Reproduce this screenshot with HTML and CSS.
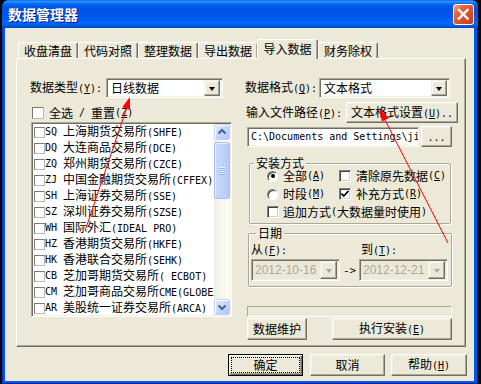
FILE: index.html
```html
<!DOCTYPE html>
<html>
<head>
	<meta http-equiv="Content-Type" content="text/html; charset=utf-8" />
	<title>数据管理器</title>
	<link rel="stylesheet" href="styles.css">
</head>
<body>
<div class="window">
	<div class="title_bar">
		<span class="title">数据管理器</span>
		<span class="close_btn">
			<svg width="19" height="19" viewBox="0 0 19 19"><path d="M5 5 L13.5 13.5 M13.5 5 L5 13.5" stroke="#fff" stroke-width="2.4" stroke-linecap="square" fill="none"/></svg>
		</span>
	</div>
	<div class="client">
		<div class="tabs">
			<div class="tab">收盘清盘</div>
			<div class="tab">代码对照</div>
			<div class="tab">整理数据</div>
			<div class="tab">导出数据</div>
			<div class="tab tab_active">导入数据</div>
			<div class="tab">财务除权</div>
		</div>
		<div class="panel">
			<div class="col_left">
				<div class="form_row">
					<span class="label label_type">数据类型<span class="en">(<u>Y</u>):</span></span>
					<div class="combo combo_type">
						<span class="combo_text">日线数据</span>
						<span class="drop_btn"><i class="arrow_down"></i></span>
					</div>
				</div>
				<div class="check_line">
					<span class="check"></span>全选<span class="en"> / </span>重置<span class="en">(<u>Z</u>)</span>
				</div>
				<div class="listbox">
					<div class="list_items">
						<div class="list_item"><span class="check"></span><span class="code">SQ</span><span>上海期货交易所<span class="en">(SHFE)</span></span></div>
						<div class="list_item"><span class="check"></span><span class="code">DQ</span><span>大连商品交易所<span class="en">(DCE)</span></span></div>
						<div class="list_item"><span class="check"></span><span class="code">ZQ</span><span>郑州期货交易所<span class="en">(CZCE)</span></span></div>
						<div class="list_item"><span class="check"></span><span class="code">ZJ</span><span>中国金融期货交易所<span class="en">(CFFEX)</span></span></div>
						<div class="list_item"><span class="check"></span><span class="code">SH</span><span>上海证券交易所<span class="en">(SSE)</span></span></div>
						<div class="list_item"><span class="check"></span><span class="code">SZ</span><span>深圳证券交易所<span class="en">(SZSE)</span></span></div>
						<div class="list_item"><span class="check"></span><span class="code">WH</span><span>国际外汇<span class="en">(IDEAL PRO)</span></span></div>
						<div class="list_item"><span class="check"></span><span class="code">HZ</span><span>香港期货交易所<span class="en">(HKFE)</span></span></div>
						<div class="list_item"><span class="check"></span><span class="code">HK</span><span>香港联合交易所<span class="en">(SEHK)</span></span></div>
						<div class="list_item"><span class="check"></span><span class="code">CB</span><span>芝加哥期货交易所<span class="en">( ECBOT)</span></span></div>
						<div class="list_item"><span class="check"></span><span class="code">CM</span><span>芝加哥商品交易所<span class="en">CME(GLOBEX)</span></span></div>
						<div class="list_item"><span class="check"></span><span class="code">AR</span><span>美股统一证券交易所<span class="en">(ARCA)</span></span></div>
					</div>
					<div class="vscroll">
						<div class="sb_btn">
							<svg width="14" height="14" viewBox="0 0 14 14"><path d="M3.5 8.5 L7 5 L10.5 8.5" stroke="#4D6185" stroke-width="2" fill="none"/></svg>
						</div>
						<div class="sb_thumb">
							<svg width="8" height="8" viewBox="0 0 8 8"><path d="M1 0.5 H7 M1 2.5 H7 M1 4.5 H7 M1 6.5 H7" stroke="#EEF3FE" stroke-width="1"/><path d="M1 1.5 H7 M1 3.5 H7 M1 5.5 H7 M1 7.5 H7" stroke="#8CB0F8" stroke-width="1"/></svg>
						</div>
						<div class="sb_track"></div>
						<div class="sb_btn">
							<svg width="14" height="14" viewBox="0 0 14 14"><path d="M3.5 5.5 L7 9 L10.5 5.5" stroke="#4D6185" stroke-width="2" fill="none"/></svg>
						</div>
					</div>
				</div>
			</div>
			<div class="col_right">
				<div class="form_row">
					<span class="label label_format">数据格式<span class="en">(<u>Q</u>):</span></span>
					<div class="combo combo_format">
						<span class="combo_text">文本格式</span>
						<span class="drop_btn"><i class="arrow_down"></i></span>
					</div>
				</div>
				<div class="form_row path_row">
					<span class="label label_path">输入文件路径<span class="en">(<u>P</u>):</span></span>
					<button class="btn btn_setup">文本格式设置<span class="en">(<u>U</u>)..</span></button>
				</div>
				<div class="form_row file_row">
					<div class="path_input">C:\Documents and Settings\ji</div>
					<button class="btn btn_browse"><span class="en">...</span></button>
				</div>
				<fieldset class="group group_install">
					<legend>安装方式</legend>
					<div class="group_body">
						<div class="opt_row">
							<span class="opt"><span class="radio radio_on"></span>全部<span class="en">(<u>A</u>)</span></span>
							<span class="opt"><span class="check check_3d"></span>清除原先数据<span class="en">(<u>C</u>)</span></span>
						</div>
						<div class="opt_row">
							<span class="opt"><span class="radio"></span>时段<span class="en">(<u>M</u>)</span></span>
							<span class="opt"><span class="check check_3d"><svg width="10" height="10" viewBox="0 0 10 10"><path d="M1.5 4.5 L3.8 7 L8.5 2" stroke="#000" stroke-width="1.8" fill="none"/></svg></span>补充方式<span class="en">(<u>R</u>)</span></span>
						</div>
						<div class="opt_row">
							<span class="opt opt_wide"><span class="check check_3d"></span>追加方式<span class="en">(</span>大数据量时使用<span class="en">)</span></span>
						</div>
					</div>
				</fieldset>
				<fieldset class="group group_date">
					<legend>日期</legend>
					<div class="date_labels">
						<span class="date_from">从<span class="en">(<u>F</u>):</span></span>
						<span>到<span class="en">(<u>T</u>):</span></span>
					</div>
					<div class="date_row">
						<div class="combo combo_date">
							<span class="combo_text">2012-10-16</span>
							<span class="drop_btn"><i class="arrow_down arrow_off"></i></span>
						</div>
						<span class="date_sep en">-&gt;</span>
						<div class="combo combo_date">
							<span class="combo_text">2012-12-21</span>
							<span class="drop_btn"><i class="arrow_down arrow_off"></i></span>
						</div>
					</div>
				</fieldset>
				<div class="progress"></div>
				<div class="action_row">
					<button class="btn btn_keep">数据维护</button>
					<button class="btn btn_run">执行安装<span class="en">(<u>E</u>)</span></button>
				</div>
			</div>
		</div>
		<div class="footer">
			<button class="btn btn_default"><span class="focus">确定</span></button>
			<button class="btn btn_cancel">取消</button>
			<button class="btn btn_help">帮助<span class="en">(<u>H</u>)</span></button>
		</div>
	</div>
</div>
<svg class="marks" width="481" height="384" viewBox="0 0 481 384">
	<line x1="86" y1="228" x2="127" y2="107" stroke="#FF0000" stroke-width="1"/>
	<polygon points="130,97 130,110 122.4,107.1" fill="#FF0000"/>
	<line x1="448" y1="243" x2="384" y2="118" stroke="#FF0000" stroke-width="1"/>
	<polygon points="379,108 389,118 381.9,121.5" fill="#FF0000"/>
</svg>
</body>
</html>
```

FILE: styles.css
```css
body{
	margin: 0;
	width: 481px;
	height: 384px;
	overflow: hidden;
	position: relative;
	background-color: #0a0a0a;
	font-family: "Noto Sans CJK SC", sans-serif;
	font-size: 12px;
	color: #000;
}

u{
	text-decoration: underline;
	text-underline-offset: 1px;
}

/* latin parts: narrow monospace like the old bitmap font */
.en{
	font-family: "DejaVu Sans Mono", monospace;
	font-size: 10px;
	white-space: pre;
}

/* xp window frame */
.window{
	margin-left: 2px;
	width: 476px;
	height: 384px;
	box-sizing: border-box;
	padding: 0 4px 3px 3px;
	background-color: #0055EA;
	border-radius: 7px 7px 0 0;
	box-shadow: inset 1px 0 #0831D9, inset -1px 0 #001EA0, inset 0 -1px #001EA0;
	display: flex;
	flex-direction: column;
}

.title_bar{
	height: 28px;
	margin: 0 -4px 0 -3px;
	padding-left: 6px;
	display: flex;
	align-items: center;
	flex-shrink: 0;
	border-radius: 7px 7px 0 0;
	background: linear-gradient(to bottom, #0058EE 0%, #3593FF 4%, #288EFF 7%, #127DFF 10%, #036FFC 13%, #0262EE 17%, #0057E5 24%, #0054E3 30%, #0055EB 56%, #005BF5 68%, #026AFE 80%, #0062EF 88%, #0052D6 94%, #0046C4 100%);
}

.title{
	color: #fff;
	font-weight: bold;
	font-size: 14px;
	line-height: 16px;
	text-shadow: 1px 1px #0A1883;
}

.close_btn{
	margin-left: auto;
	margin-right: 4px;
	width: 21px;
	height: 21px;
	box-sizing: border-box;
	border: 1px solid #fff;
	border-radius: 3px;
	background: linear-gradient(135deg, #F0A48A 0%, #E2633F 30%, #D4481F 75%, #C13C18 100%);
	display: flex;
}

.client{
	flex: 1;
	background-color: #ECE9D8;
	padding: 11px 8px 0 11px;
	box-sizing: border-box;
}

/* tabs */
.tabs{
	height: 19px;
	padding-left: 2px;
	display: flex;
	align-items: flex-end;
}

.tab{
	width: 60px;
	height: 16px;
	box-sizing: border-box;
	flex-shrink: 0;
	border-top: 1px solid #fff;
	border-left: 1px solid #fff;
	border-right: 1px solid #716F64;
	box-shadow: inset -1px 0 #ACA899;
	border-radius: 2px 2px 0 0;
	text-align: center;
	line-height: 15px;
	background-color: #ECE9D8;
}

.tab_active{
	width: 61px;
	height: 20px;
	margin-left: -1px;
	margin-bottom: -1px;
	line-height: 17px;
	position: relative;
	z-index: 1;
}

.panel{
	width: 450px;
	height: 289px;
	box-sizing: border-box;
	border: 1px solid;
	border-color: #fff #716F64 #716F64 #fff;
	box-shadow: inset -1px -1px #ACA899;
	padding: 19px 7px 0 13px;
	display: flex;
	gap: 14px;
}

.col_left{
	width: 201px;
	flex-shrink: 0;
	display: flex;
	flex-direction: column;
}

.col_right{
	width: 212px;
	flex-shrink: 0;
	display: flex;
	flex-direction: column;
}

.form_row{
	height: 20px;
	display: flex;
	align-items: center;
	flex-shrink: 0;
}

.label{
	flex-shrink: 0;
	line-height: 16px;
	white-space: nowrap;
}
.label_type{ width: 76px; }
.label_format{ width: 74px; }
.label_path{
	width: 100px;
	padding-left: 1px;
}

/* combo box */
.combo{
	height: 20px;
	box-sizing: border-box;
	flex-shrink: 0;
	border: 1px solid;
	border-color: #ACA899 #fff #fff #ACA899;
	box-shadow: inset 1px 1px #716F64, inset -1px -1px #F1EFE2;
	background-color: #fff;
	padding: 2px;
	display: flex;
	align-items: center;
}
.combo_type{ width: 117px; }
.combo_format{ width: 131px; }

.combo_text{
	flex: 1;
	min-width: 0;
	padding-left: 2px;
	line-height: 16px;
	white-space: nowrap;
	overflow: hidden;
}

.drop_btn{
	width: 16px;
	height: 16px;
	box-sizing: border-box;
	flex-shrink: 0;
	background-color: #ECE9D8;
	border: 1px solid;
	border-color: #F1EFE2 #716F64 #716F64 #F1EFE2;
	box-shadow: inset -1px -1px #ACA899, inset 1px 1px #fff;
	display: flex;
	align-items: center;
	justify-content: center;
}

.arrow_down{
	width: 0;
	height: 0;
	border-style: solid;
	border-width: 4px 3.5px 0 3.5px;
	border-color: #000 transparent transparent transparent;
	margin-top: 1px;
}
.arrow_off{
	border-top-color: #ACA899;
}

/* check boxes */
.check{
	width: 11px;
	height: 11px;
	box-sizing: border-box;
	flex-shrink: 0;
	background-color: #fff;
	border: 1px solid;
	border-color: #7A7A7A #B8B8B8 #B8B8B8 #7A7A7A;
	display: flex;
	align-items: center;
	justify-content: center;
}
.check_3d{
	width: 12px;
	height: 12px;
	border-color: #808080 #fff #fff #808080;
	box-shadow: inset 1px 1px #404040, inset -1px -1px #D4D0C8;
}

.check_line{
	height: 17px;
	margin-top: 6px;
	padding-left: 2px;
	display: flex;
	align-items: center;
	line-height: 16px;
	flex-shrink: 0;
}
.check_line .check{
	width: 12px;
	height: 12px;
	margin-right: 5px;
}

/* list of exchanges */
.listbox{
	width: 201px;
	height: 195px;
	margin: 1px 0 0 1px;
	box-sizing: border-box;
	flex-shrink: 0;
	border: 1px solid;
	border-color: #ACA899 #fff #fff #ACA899;
	box-shadow: inset 1px 1px #716F64, inset -1px -1px #F1EFE2;
	background-color: #fff;
	padding: 1px;
	display: flex;
}

.list_items{
	flex: 1;
	overflow: hidden;
	padding-left: 1px;
}

.list_item{
	height: 16px;
	line-height: 16px;
	display: flex;
	align-items: center;
	white-space: nowrap;
}

.code{
	width: 18px;
	flex-shrink: 0;
	font-family: "DejaVu Sans Mono", monospace;
	font-size: 10px;
}

.vscroll{
	width: 16px;
	flex-shrink: 0;
	display: flex;
	flex-direction: column;
	background: linear-gradient(to right, #F1EFE6, #FDFDFA);
}

.sb_btn{
	height: 16px;
	box-sizing: border-box;
	border: 1px solid #C3D3FD;
	border-radius: 2px;
	background: linear-gradient(135deg, #E1EAFE, #BED2FB 60%, #B2C8F8);
	box-shadow: inset 1px 1px #fff;
	display: flex;
	align-items: center;
	justify-content: center;
}

.sb_thumb{
	height: 57px;
	margin-top: 2px;
	box-sizing: border-box;
	border: 1px solid #A9BFF2;
	border-radius: 2px;
	background: linear-gradient(to right, #CBDAFC, #BDD0FA 60%, #B3C8F7);
	box-shadow: inset 1px 1px #E8EFFE;
	display: flex;
	align-items: center;
	justify-content: center;
}

.sb_track{
	flex: 1;
}

/* right column */
.path_row{
	height: 21px;
	margin-top: 4px;
}

.file_row{
	height: 21px;
	margin-top: 3px;
	padding-left: 2px;
}

.path_input{
	width: 172px;
	height: 20px;
	box-sizing: border-box;
	flex-shrink: 0;
	margin-right: 2px;
	border: 1px solid;
	border-color: #ACA899 #fff #fff #ACA899;
	box-shadow: inset 1px 1px #716F64, inset -1px -1px #F1EFE2;
	background-color: #fff;
	padding: 0 3px;
	font-family: "DejaVu Sans Mono", monospace;
	font-size: 10px;
	line-height: 18px;
	white-space: pre;
	overflow: hidden;
}

.btn{
	font-family: inherit;
	font-size: 12px;
	color: #000;
	height: 22px;
	box-sizing: border-box;
	flex-shrink: 0;
	padding: 0;
	background-color: #ECE9D8;
	border: 1px solid;
	border-color: #fff #716F64 #716F64 #fff;
	box-shadow: inset -1px -1px #ACA899, inset 1px 1px #F1EFE2;
	line-height: 16px;
	white-space: nowrap;
}

.btn_setup{
	width: 112px;
	height: 21px;
}

.btn_browse{
	width: 31px;
	height: 21px;
}

.group{
	margin: 9px 0 0 4px;
	padding: 0 0 2px 0;
	min-width: 0;
	width: 202px;
	box-sizing: border-box;
	border: 1px solid #ACA899;
	border-radius: 2px;
	box-shadow: inset 1px 1px #fff, 1px 1px #fff;
}

.group legend{
	padding: 0 2px;
	margin-left: 4px;
	line-height: 14px;
	font-size: 12px;
}

.group_body{
	margin-top: -3px;
	padding-left: 17px;
}

.opt_row{
	height: 18px;
	display: flex;
	align-items: center;
}

.opt{
	width: 72px;
	display: flex;
	align-items: center;
	line-height: 16px;
	white-space: nowrap;
}
.opt .check{
	margin-right: 5px;
}
.opt_wide{
	width: auto;
}
.opt_wide .check{
	margin-right: 4px;
}

.radio{
	width: 11px;
	height: 11px;
	box-sizing: border-box;
	flex-shrink: 0;
	margin-right: 5px;
	border-radius: 50%;
	border: 1px solid;
	border-color: #808080 #fff #fff #808080;
	box-shadow: inset 1px 1px #404040;
	background-color: #fff;
	display: flex;
	align-items: center;
	justify-content: center;
}
.radio_on::after{
	content: "";
	width: 4px;
	height: 4px;
	border-radius: 50%;
	background-color: #000;
}

.group_date{
	margin: 2px 0 0 3px;
	width: 204px;
	padding-bottom: 5px;
}
.group_date legend{
	margin-left: 7px;
}

.date_labels{
	height: 16px;
	margin-top: 2px;
	padding-left: 2px;
	display: flex;
	align-items: center;
	line-height: 16px;
}
.date_from{
	width: 110px;
}

.date_row{
	height: 22px;
	margin-top: 1px;
	padding-left: 2px;
	display: flex;
	align-items: center;
}

.combo_date{
	width: 89px;
	height: 22px;
	background-color: #ECE9D8;
	color: #ACA899;
	font-family: "Liberation Sans", sans-serif;
}
.combo_date .combo_text{
	padding-left: 1px;
}
.combo_date .drop_btn{
	width: 17px;
	height: 18px;
}

.date_sep{
	width: 19px;
	text-align: center;
	flex-shrink: 0;
	font-size: 11px;
}

.progress{
	width: 205px;
	height: 11px;
	margin: 19px 0 0 2px;
	box-sizing: border-box;
	flex-shrink: 0;
	border: 1px solid;
	border-color: #ACA899 #fff #fff #ACA899;
}

.action_row{
	margin-top: 1px;
	padding-left: 2px;
	display: flex;
}
.btn_keep{ width: 60px; }
.btn_run{
	width: 120px;
	margin-left: 25px;
}

/* dialog buttons */
.footer{
	margin-top: 7px;
	margin-right: -1px;
	display: flex;
	justify-content: flex-end;
}

.btn_default{
	width: 75px;
	margin-right: 7px;
	border: 1px solid #000;
	box-shadow: inset 1px 1px #fff, inset -1px -1px #716F64, inset -2px -2px #ACA899;
	padding: 2px;
	display: flex;
}
.focus{
	flex: 1;
	border: 1px dotted #000;
	line-height: 14px;
	text-align: center;
}
.btn_cancel{
	width: 75px;
	margin-right: 6px;
}
.btn_help{ width: 76px; }

/* red marks drawn over the dialog */
.marks{
	position: absolute;
	top: 0;
	left: 0;
	pointer-events: none;
}
```
